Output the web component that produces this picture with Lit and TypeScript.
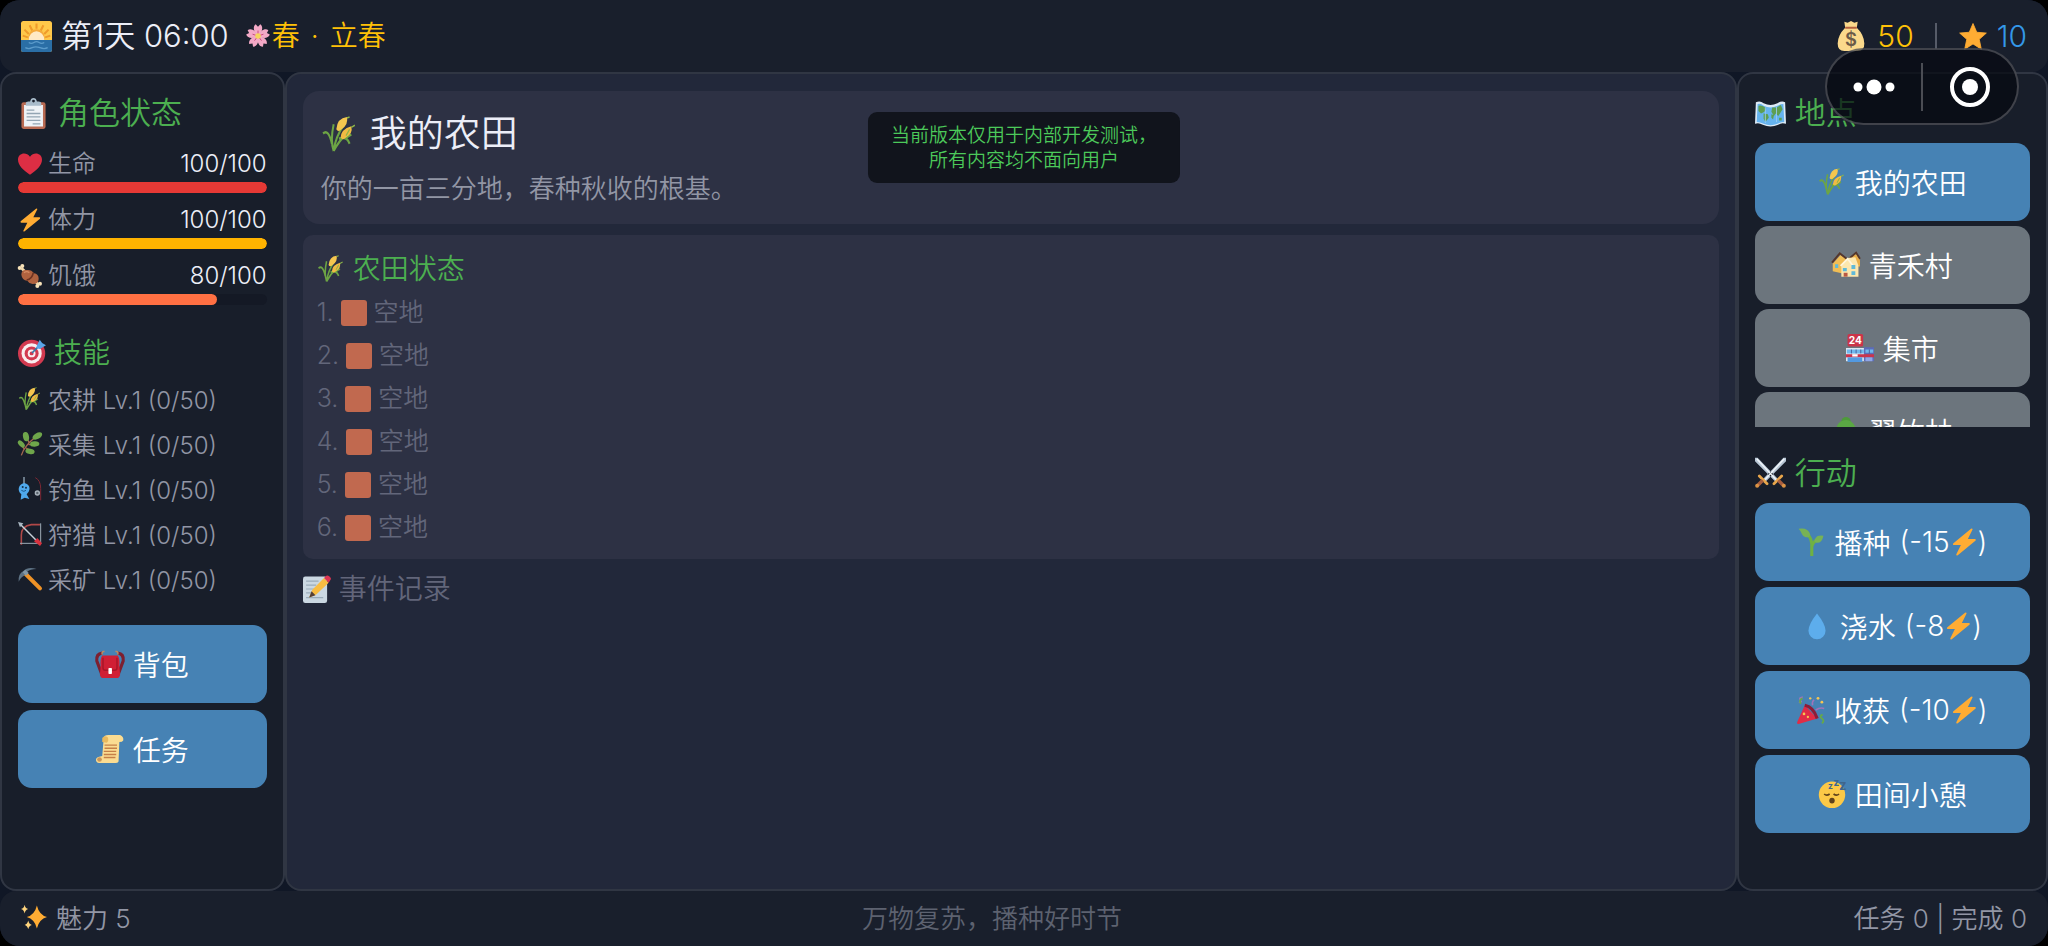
import { LitElement, html, css, svg, TemplateResult } from "lit";
import { customElement, state } from "lit/decorators.js";
import { classMap } from "lit/directives/class-map.js";

const icons: Record<string, TemplateResult> = {
  sunrise: svg`<rect x="0" y="0" width="36" height="36" rx="3" fill="#ffc84a"/><path d="M18 3v6M10 5l3 6M26 5l-3 6M4 10l5 5M32 10l-5 5M2 17l6 2M34 17l-6 2" stroke="#ef9a2a" stroke-width="2.4"/><circle cx="18" cy="19" r="9.5" fill="#f4a93a"/><path d="M9 22a9 10 0 0 1 18 0z" fill="#ffe9c4"/><path d="M0 22h36v11a3 3 0 0 1-3 3H3a3 3 0 0 1-3-3z" fill="#2a6ea6"/><path d="M9 25q3 2 6 0t6 0 6 0M5 31q4 2 8 0t9 0 9 0" fill="none" stroke="#5b9bcb" stroke-width="1.5"/>`,
  blossom: svg`<g fill="#f3a9c6"><path d="M18 18C12 13 11 6 15 3l3 3 3-3c4 3 3 10-3 15z"/><path d="M18 18C12 13 11 6 15 3l3 3 3-3c4 3 3 10-3 15z" transform="rotate(72 18 18)"/><path d="M18 18C12 13 11 6 15 3l3 3 3-3c4 3 3 10-3 15z" transform="rotate(144 18 18)"/><path d="M18 18C12 13 11 6 15 3l3 3 3-3c4 3 3 10-3 15z" transform="rotate(216 18 18)"/><path d="M18 18C12 13 11 6 15 3l3 3 3-3c4 3 3 10-3 15z" transform="rotate(288 18 18)"/></g><g stroke="#c9457c" stroke-width="1.2"><path d="M18 18v-7M18 18l7-2.300M18 18l4.500 6M18 18l-4.500 6M18 18l-7-2.300"/></g><circle cx="18" cy="18" r="3.600" fill="#f5d35c"/>`,
  clipboard: svg`<rect x="4" y="5" width="28" height="31" rx="2.5" fill="#b96a52"/><path d="M7 8h22v25H7z" fill="#eef2f6"/><path d="M9 9V6q0-2 3-2h2q1-4 4-4t4 4h2q3 0 3 2v3z" fill="#a9bccb"/><circle cx="18" cy="3.5" r="1.6" fill="#181e2a"/><path d="M10 14h9M10 18h16M10 22h16M10 26h16M17 30h9" stroke="#93a5b3" stroke-width="1.5"/>`,
  heart: svg`<path d="M18 34C8 27 0 20 0 11.500C0 2 12-1 18 7 24-1 36 2 36 11.500 36 20 28 27 18 34z" fill="#dd2e44"/>`,
  bolt: svg`<path d="M27 1 4 20q-1 2 1 2h9L8 34q0 2 2 1L33 16q1-2-1-2h-9L29 2q0-2-2-1z" fill="#ffac33"/>`,
  meat: svg`<path d="M5 6l26 25" stroke="#f3dcae" stroke-width="4"/><g fill="#f6e1b8"><circle cx="2.500" cy="6" r="3"/><circle cx="6.500" cy="3" r="3"/><circle cx="29" cy="33" r="3"/><circle cx="33" cy="29.500" r="3"/></g><path d="M5 16Q5 8 13 9q7-1 11 5 7 1 7 8 0 8-9 8-6-1-8-5-8-1-9-9z" fill="#b0623f"/><path d="M13 24q8-1 10-11" fill="none" stroke="#6e3322" stroke-width="2.500"/><path d="M9 13q4-3 8 0" stroke="#d48a62" stroke-width="2" fill="none"/>`,
  target: svg`<circle cx="17.500" cy="18.500" r="17.500" fill="#d23a50"/><circle cx="17.500" cy="18.500" r="13" fill="#f8eef0"/><circle cx="17.500" cy="18.500" r="9" fill="#d23a50"/><circle cx="17.500" cy="18.500" r="5" fill="#f8eef0"/><circle cx="17.500" cy="18.500" r="2.500" fill="#d23a50"/><path d="M18 18 29 7" stroke="#3678a8" stroke-width="2.200"/><path d="m24 9 4-8 3 4 5 3-8 5-4-1z" fill="#59a6e8"/>`,
  wheat: svg`<g transform="translate(2 0) scale(.86 1)"><g fill="none" stroke="#6da544" stroke-width="2.300"><path d="M12 34Q14 20 24 8M12 34q6-10 15-17M12 34Q8 24 12 8M10 27Q6 12 0 17M18 22q9-3 12 5M24 22l8-4"/></g><path d="M15 13Q16 2 27 1q2 7-6 12-4 3-6 0z" fill="#f5c64f"/><path d="M20 21q0-8 12-11 2 7-6 11-4 3-6 0z" fill="#f0bb43"/><path d="m27 2 3-1M32 11l4-2M26 19l4-6" stroke="#8db548" stroke-width="1.400"/></g>`,
  herb: svg`<path d="M5 35Q9 21 28 6M9 25 4 18M12 24l12 6M17 17l-4-9M16 19l10 0" stroke="#a5694f" stroke-width="2" fill="none"/><g fill="#6fa64b"><ellipse cx="5" cy="18" rx="3.500" ry="6.500" transform="rotate(-45 5 18)"/><ellipse cx="12" cy="7" rx="4.500" ry="7" transform="rotate(-12 12 7)"/><ellipse cx="29" cy="6" rx="4.500" ry="8" transform="rotate(60 29 6)"/><ellipse cx="25" cy="18" rx="4" ry="7" transform="rotate(88 25 18)"/><ellipse cx="18" cy="29" rx="4" ry="7" transform="rotate(100 18 29)"/></g>`,
  fishing: svg`<path d="M9 0v10" stroke="#93a8b8" stroke-width="2"/><path d="M9 9c8 1 10 8 7 13l-3 4 4 7-7-2-6 3 1-8C-2 20 1 11 9 9z" fill="#4fa9ec"/><circle cx="7" cy="15" r="1.500" fill="#14304a"/><circle cx="12" cy="16" r="1.500" fill="#14304a"/><path d="M5 20q4 3 7 0" stroke="#1d5c8f" stroke-width="1.500" fill="none"/><path d="M26 1q8 4 8 16v18" stroke="#7c2733" stroke-width="1.500" fill="none"/><circle cx="29" cy="24" r="4" fill="#a9b3bc"/><circle cx="29" cy="24" r="1.800" fill="#59636c"/>`,
  bow: svg`<path d="M33 4H20Q5 6 5 20v14" stroke="#b04848" stroke-width="2.400" fill="none"/><path d="M34 2v30H3" stroke="#9eabb6" stroke-width="1.500" fill="none"/><path d="m3 3 28 28" stroke="#c8d1d8" stroke-width="2.200"/><path d="m0 0 8 2-5 6z" fill="#a9b7c2"/><path d="m24 29 5-5 7 8-3 4z" fill="#d8323f"/>`,
  pick: svg`<path d="m10 9 23 23" stroke="#ee9226" stroke-width="6" stroke-linecap="round"/><path d="M1 22Q0 10 8 6 15-1 28 3q-10 0-14 4l-5 6Q4 15 1 22z" fill="#5e7385"/><path d="m7 8 4-4 5 5-4 4z" fill="#8297a6"/>`,
  backpack: svg`<path d="M8 4Q0 5 1 14l6 16M28 4q8 1 7 10l-6 16" fill="none" stroke="#7d1f30" stroke-width="4"/><path d="M8 6q-1-5 3-4M28 6q1-5-3-4" stroke="#b98a63" stroke-width="2" fill="none"/><path d="M8 7h20q3 5 2 13l1 12q-1 4-4 4H9q-3 0-4-4l1-12Q5 12 8 7z" fill="#d01f35"/><path d="M9 10v13q0 3 3 3h12q3 0 3-3V10" fill="none" stroke="#a81529" stroke-width="1.800"/><rect x="16" y="23" width="4.500" height="8" rx="1" fill="#fff"/>`,
  scroll: svg`<path d="M10 4q0-4 6-4h15q5 2 4 7-1 2-5 2l-1 25q-1 2-4 2H4q-4-1-4-4t4-4l4-1z" fill="#fbdc91"/><path d="M8 4q3-4 7-1 2 4-1 7L8 9z" fill="#e9b95e"/><circle cx="4.500" cy="31.500" r="3" fill="#c9975b"/><path d="M11 13h16M11 17h16M10 21h16M10 25h16M10 29h15" stroke="#c68048" stroke-width="1.800"/>`,
  sparkles: svg`<path d="M22 2q3 13 14 16-11 3-14 16Q19 21 8 18 19 15 22 2z" fill="#ffac33"/><path d="M5 1q1 5 5 6-4 1-5 6-1-5-5-6 4-1 5-6zM10 23q1 5 5 6-4 1-5 6-1-5-5-6 4-1 5-6z" fill="#ffd47d"/>`,
  memo: svg`<rect x="0" y="2" width="31" height="34" rx="3" fill="#cbd8e2"/><path d="M4 8h16M4 13h13M4 18h11M4 23h8M4 29h22" stroke="#9aabb9" stroke-width="1.600"/><path d="M8 29 12 19 27 4l6 6-16 15z" fill="#f9bd42"/><path d="m27 4 3-3q2-1 4 1t2 3l-3 5z" fill="#dd3552"/><path d="m8 29 3-8 5 5z" fill="#554038"/>`,
  money: svg`<path d="m10 1 4 1 4-2 4 2 4-1-1 7q9 9 9 19 0 9-8 9H10q-8 0-8-9Q2 17 11 8z" fill="#fbd98c"/><path d="M11 8h14" stroke="#b5623f" stroke-width="2.500"/><text x="18" y="30" font-size="22" text-anchor="middle" font-family="Inter, sans-serif" font-weight="600" fill="#6b5a48">$</text>`,
  star: svg`<path d="m18 3 4.500 10.500 11.500 1-8.500 7.500 2.500 12-10-6.500-10 6.500 2.500-12L2 14.500l11.500-1z" fill="#ffac33" stroke="#ffac33" stroke-linejoin="round"/>`,
  map: svg`<path d="M1 5q5-2 9 1 8 4 16 0 5-3 9-1l1 25q-5-2-9 1-9 4-18 0-5-3-9-1z" fill="#dceaf5"/><path d="M3 7q4-1 7 2 8 4 16 0 4-2 7-2l1 21q-4 0-8 2-8 3-16 0-4-2-8-2z" fill="#65b3ee"/><g fill="#5e9f51"><path d="M4 9q5-1 9 3l-2 4-4 2-3-3zM10 18l5 1 1 4-4 5-2-4zM20 11l5 0 5-3 2 5-3 5-2 3-3-3-2 3-3-5zM19 19l3 1-1 5-2-2zM28 23l3 0 0 3-3 0z"/></g><path d="M12 11v18M25 10v18" stroke="#9acdf2" stroke-width="1"/>`,
  houses: svg`<path d="m1 16 10-11 9 6-2 19-17-4z" fill="#f1bd55"/><path d="m0 15 10-12 10 8" fill="none" stroke="#55372c" stroke-width="2.500"/><path d="M24 8l7-4 5 8v8H24z" fill="#e9ae48"/><path d="m23 9 8-7 5 8" fill="none" stroke="#55372c" stroke-width="2.300"/><path d="M12 19 20 9l10-1 4 11v14H12z" fill="#fce7ae"/><path d="m11 19 9-9 7 9" fill="none" stroke="#fff6dd" stroke-width="2.200"/><g fill="#60b9d8"><path d="M14 22h5v4h-5zM25 18h5v5h-5zM25 26h5v5h-5zM4 17h4v5H4z"/></g><path d="M15 28h5v5h-5z" fill="#ba5a43"/>`,
  store: svg`<rect x="2" y="0" width="20" height="16" rx="2" fill="#cb3449"/><text x="12" y="13" font-size="13" font-weight="700" text-anchor="middle" font-family="Inter, sans-serif" fill="#fff">24</text><path d="M0 18h24v17H0z" fill="#dfe8f2"/><path d="M23 17h13v18H23z" fill="#5c6cb8"/><path d="M1 20h22v5H1zM25 20h10v4H25z" fill="#70b8ed"/><path d="M7 20v5M13 20v5M19 20v5M30 20v5" stroke="#3f4d87"/><path d="M0 26h36v4H0z" fill="#c9344d"/><path d="M2 30h19v6H2z" fill="#5299e0"/><path d="M25 30h9v5h-9z" fill="#8fa6e6"/><path d="M8 26h7v3H8z" fill="#fff"/>`,
  bamboo: svg`<path d="M16 12v24M24 16v20" stroke="#6f8d3c" stroke-width="4"/><circle cx="18" cy="6" r="6" fill="#4e9a3b"/><path d="M6 12q4-8 12-8t12 9q-6 4-12 1-7 3-12-2z" fill="#5aa744"/>`,
  swords: svg`<path d="m3 1 25 26-3 3L0 5V1zM33 1 8 27l3 3L36 5V1z" fill="#b9c8d6"/><path d="m2 2 24 26M34 2 10 28" stroke="#f1f6fa" stroke-width="1.600"/><path d="m5 22 9 9M31 22l-9 9" stroke="#e8a64b" stroke-width="3.200" stroke-linecap="round"/><path d="m9 27-6 6M27 27l6 6" stroke="#a85f3e" stroke-width="4"/><circle cx="2.500" cy="33.500" r="2.300" fill="#db9344"/><circle cx="33.500" cy="33.500" r="2.300" fill="#db9344"/>`,
  seedling: svg`<path d="M19 36V20Q18 10 10 6M19 24q2-8 9-9" fill="none" stroke="#6fb143" stroke-width="4"/><path d="M2 1q12-2 15 7 0 4-3 4Q8 12 6 7 5 4 2 1zM34 10q-8-1-10 3-4 5 1 6 7 1 9-9z" fill="#77b255"/>`,
  drop: svg`<path d="M18 2q11 14 11 22a11 11 0 0 1-22 0Q7 16 18 2z" fill="#5dadec"/>`,
  popper: svg`<path d="m10 12 16 17L2 36q-2 0-2-2z" fill="#e02c46"/><path d="M10 12q11 2 16 17" fill="none" stroke="#8d1c37" stroke-width="4"/><path d="M3 9Q8-1 6 2q-5 0 0 6M20 12q-1-5 2-7M24 18q6-4 11-2" fill="none" stroke="#9f74bb" stroke-width="2"/><path d="M33 24q-5 2-1 5t0 6M7 3q-5 2-2 7" fill="none" stroke="#65a948" stroke-width="2.400"/><g fill="#f6c651"><circle cx="27" cy="3" r="1.800"/><circle cx="32" cy="8" r="1.800"/><circle cx="17" cy="3" r="1.500"/><circle cx="9" cy="23" r="1.700"/></g><circle cx="14" cy="27" r="1.500" fill="#f6c651"/>`,
  sleep: svg`<circle cx="18" cy="19" r="17" fill="#fcc947"/><path d="M8 18q3 3 7 0M20 18q4 3 7 0" stroke="#61431b" stroke-width="2.200" fill="none"/><ellipse cx="18" cy="26.500" rx="3.500" ry="3.800" fill="#61431b"/><g font-family="Inter, sans-serif" font-weight="700" fill="#3f668c"><text x="13" y="11" font-size="11">z</text><text x="20" y="8" font-size="13">z</text><text x="27" y="13" font-size="17">z</text></g>`,
};

const icon = (name: string) =>
  html`<svg class="icon" viewBox="0 0 36 36" aria-hidden="true">${icons[name]}</svg>`;

interface Stat { id: string; icon: string; label: string; value: number; max: number; }
interface Action { icon: string; label: string; cost?: number; }

@customElement("app-root")
export class AppRoot extends LitElement {
  @state() private place = "我的农田";

  private stats: Stat[] = [
    { id: "life", icon: "heart", label: "生命", value: 100, max: 100 },
    { id: "stamina", icon: "bolt", label: "体力", value: 100, max: 100 },
    { id: "hunger", icon: "meat", label: "饥饿", value: 80, max: 100 },
  ];
  private skills = [
    ["wheat", "农耕"], ["herb", "采集"], ["fishing", "钓鱼"], ["bow", "狩猎"], ["pick", "采矿"],
  ];
  private places = [
    ["wheat", "我的农田"], ["houses", "青禾村"], ["store", "集市"], ["bamboo", "翠竹林"],
  ];
  private actions: Action[] = [
    { icon: "seedling", label: "播种", cost: 15 },
    { icon: "drop", label: "浇水", cost: 8 },
    { icon: "popper", label: "收获", cost: 10 },
    { icon: "sleep", label: "田间小憩" },
  ];

  static styles = css`
    :host {
      display: block;
      background: #000;
      color: #eceef8;
      font-family: Inter, "Noto Sans CJK SC", sans-serif;
      font-size: 28px;
      font-weight: 350;
    }
    * { box-sizing: border-box; margin: 0; padding: 0; }
    .app {
      position: relative;
      display: grid;
      grid-template-rows: auto minmax(0, 1fr) auto;
      height: 100vh;
      overflow: hidden;
      border-radius: 20px;
      background: #101726;
    }
    .icon { width: 1em; height: 1em; flex: none; overflow: visible; }
    .bar {
      display: flex;
      align-items: center;
      justify-content: space-between;
      background: #191f2c;
      border-radius: 16px;
    }
    header.bar { min-height: 72px; padding: 0 21px; font-size: 31px; line-height: 40px; }
    .group { display: flex; align-items: center; gap: 9px; white-space: nowrap; }
    .season { display: flex; align-items: center; font-size: 28px; margin-left: 6px; color: #ffc107; }
    .term { display: flex; gap: 11px; }
    .wealth { font-size: 30px; }
    .coins, .fame { display: flex; align-items: center; gap: 11px; }
    .coins { color: #ffc107; }
    .fame { color: #3498e8; gap: 9px; }
    .rule { width: 2px; height: 26px; margin: 0 12px; background: #565b68; }
    .columns { display: grid; grid-template-columns: 13.9% minmax(0, 1fr) 15.2%; min-height: 0; }
    .panel {
      min-height: 0;
      overflow: hidden;
      border: 2px solid #303643;
      border-radius: 16px;
      padding: 19px 16px;
      background: #181e2a;
    }
    .main { padding-top: 17px; background: #22283a; }
    h2, h3 {
      display: flex;
      align-items: center;
      gap: 9px;
      line-height: 40px;
      font-weight: 350;
      color: #4caf50;
    }
    h2 { font-size: 31px; }
    h3 { font-size: 28px; gap: 8px; }
    .status-title { margin-bottom: 15px; }
    .stat { margin-bottom: 11px; font-size: 24px; line-height: 32px; }
    .stat-line { display: flex; justify-content: space-between; margin-bottom: 2px; }
    .stat-label { display: flex; align-items: center; gap: 6px; color: #9296a5; }
    .track { height: 11px; border-radius: 6px; background: #141925; overflow: hidden; }
    .fill { height: 100%; border-radius: 6px; }
    .life { background: #e53935; }
    .stamina { background: #ffb300; }
    .hunger { background: #ff7043; }
    .skills-title { margin-top: 28px; margin-bottom: 3px; }
    ul, ol { list-style: none; }
    .skill { display: flex; align-items: center; gap: 6px; height: 45px; font-size: 24px; color: #9296a5; }
    .menu { display: grid; gap: 7px; margin-top: 24px; }
    button {
      display: flex;
      align-items: center;
      justify-content: center;
      gap: 9px;
      flex: none;
      width: 100%;
      height: 78px;
      border: 0;
      border-radius: 14px;
      background: #4682b4;
      color: #fff;
      font: inherit;
      cursor: pointer;
      white-space: nowrap;
    }
    button.away { background: #6c757d; }
    .cost { display: inline-flex; align-items: center; }
    .stack { display: flex; flex-direction: column; gap: 6px; }
    .places { gap: 5px; max-height: 30vh; overflow: auto; scrollbar-width: none; }
    .side-title { margin-bottom: 10px; }
    .act-title { margin-top: 26px; }
    .card { background: #2d3144; }
    .intro { padding: 18px; border-radius: 16px; margin-bottom: 11px; }
    h1 { display: flex; align-items: center; gap: 12px; font-size: 37px; line-height: 50px; font-weight: 350; margin-bottom: 12px; }
    .desc { font-size: 26px; line-height: 35px; color: #9296a5; }
    .farm { padding: 14px 14px 10px; border-radius: 10px; margin-bottom: 10px; }
    .farm h3 { margin-bottom: 2px; }
    .plot { display: flex; align-items: center; gap: 7px; font-size: 25px; line-height: 43px; color: #62667a; }
    .soil { width: 26px; height: 26px; border-radius: 3px; background: #c1694f; }
    .log { color: #62667a; }
    footer.bar {
      min-height: 55px;
      padding: 0 21px 4px;
      font-size: 26px;
      color: #9296a5;
    }
    .hint { color: #5d6270; }
    .notice {
      position: absolute;
      top: 112px;
      left: 50%;
      transform: translateX(-50%);
      padding: 11px 23px 10px;
      border-radius: 9px;
      background: #11141c;
      color: #4cc95a;
      font-size: 19px;
      line-height: 25px;
      text-align: center;
      white-space: nowrap;
    }
    .capsule {
      position: absolute;
      top: 48px;
      right: 29px;
      display: flex;
      align-items: center;
      width: 194px;
      height: 77px;
      border: 2px solid rgba(255, 255, 255, 0.22);
      border-radius: 39px;
      background: rgba(6, 8, 16, 0.72);
    }
    .capsule button { flex: 1; height: 100%; background: none; }
    .capsule svg { width: 44px; height: 44px; fill: #fff; }
    .split { width: 2px; height: 48px; background: #4b4d54; }
  `;

  private renderAction(a: Action) {
    return html`<button type="button">
      ${icon(a.icon)}<span>${a.label}</span>
      ${a.cost ? html`<span class="cost">(-${a.cost}${icon("bolt")})</span>` : ""}
    </button>`;
  }

  render() {
    return html`
      <div class="app">
        <header class="bar">
          <div class="group">
            ${icon("sunrise")}<span>第1天 06:00</span>
            <span class="season">${icon("blossom")}<span class="term"><span>春</span><span>·</span><span>立春</span></span></span>
          </div>
          <div class="group wealth">
            <span class="coins">${icon("money")}50</span>
            <span class="rule"></span>
            <span class="fame">${icon("star")}10</span>
          </div>
        </header>

        <div class="columns">
          <aside class="panel">
            <h2 class="status-title">${icon("clipboard")}角色状态</h2>
            ${this.stats.map((s) => html`
              <div class="stat">
                <div class="stat-line">
                  <span class="stat-label">${icon(s.icon)}${s.label}</span>
                  <span>${s.value}/${s.max}</span>
                </div>
                <div class="track">
                  <div class="fill ${s.id}" style="width:${(s.value / s.max) * 100}%"></div>
                </div>
              </div>`)}
            <h3 class="skills-title">${icon("target")}技能</h3>
            <ul>
              ${this.skills.map(([i, name]) => html`<li class="skill">${icon(i)}<span>${name} Lv.1 (0/50)</span></li>`)}
            </ul>
            <div class="menu">
              <button type="button">${icon("backpack")}背包</button>
              <button type="button">${icon("scroll")}任务</button>
            </div>
          </aside>

          <main class="panel main">
            <section class="card intro">
              <h1>${icon("wheat")}我的农田</h1>
              <p class="desc">你的一亩三分地，春种秋收的根基。</p>
            </section>
            <section class="card farm">
              <h3>${icon("wheat")}农田状态</h3>
              <ol>
                ${[1, 2, 3, 4, 5, 6].map((n) => html`<li class="plot"><span>${n}.</span><span class="soil"></span><span>空地</span></li>`)}
              </ol>
            </section>
            <h3 class="log">${icon("memo")}事件记录</h3>
          </main>

          <aside class="panel">
            <h2 class="side-title">${icon("map")}地点</h2>
            <div class="stack places">
              ${this.places.map(([i, name]) => html`
                <button type="button" class=${classMap({ away: name !== this.place })}
                  @click=${() => (this.place = name)}>${icon(i)}${name}</button>`)}
            </div>
            <h2 class="side-title act-title">${icon("swords")}行动</h2>
            <div class="stack">${this.actions.map((a) => this.renderAction(a))}</div>
          </aside>
        </div>

        <footer class="bar">
          <span class="group">${icon("sparkles")}魅力 5</span>
          <span class="hint">万物复苏，播种好时节</span>
          <span>任务 0 | 完成 0</span>
        </footer>

        <div class="notice">当前版本仅用于内部开发测试，<br />所有内容均不面向用户</div>
        <div class="capsule">
          <button type="button" aria-label="更多">
            <svg viewBox="0 0 44 44"><circle cx="6" cy="22" r="4.500" /><circle cx="22" cy="22" r="7.500" /><circle cx="38" cy="22" r="4.500" /></svg>
          </button>
          <span class="split"></span>
          <button type="button" aria-label="关闭">
            <svg viewBox="0 0 44 44"><circle cx="22" cy="22" r="18" fill="none" stroke="#fff" stroke-width="4" /><circle cx="22" cy="22" r="8" /></svg>
          </button>
        </div>
      </div>
    `;
  }
}
